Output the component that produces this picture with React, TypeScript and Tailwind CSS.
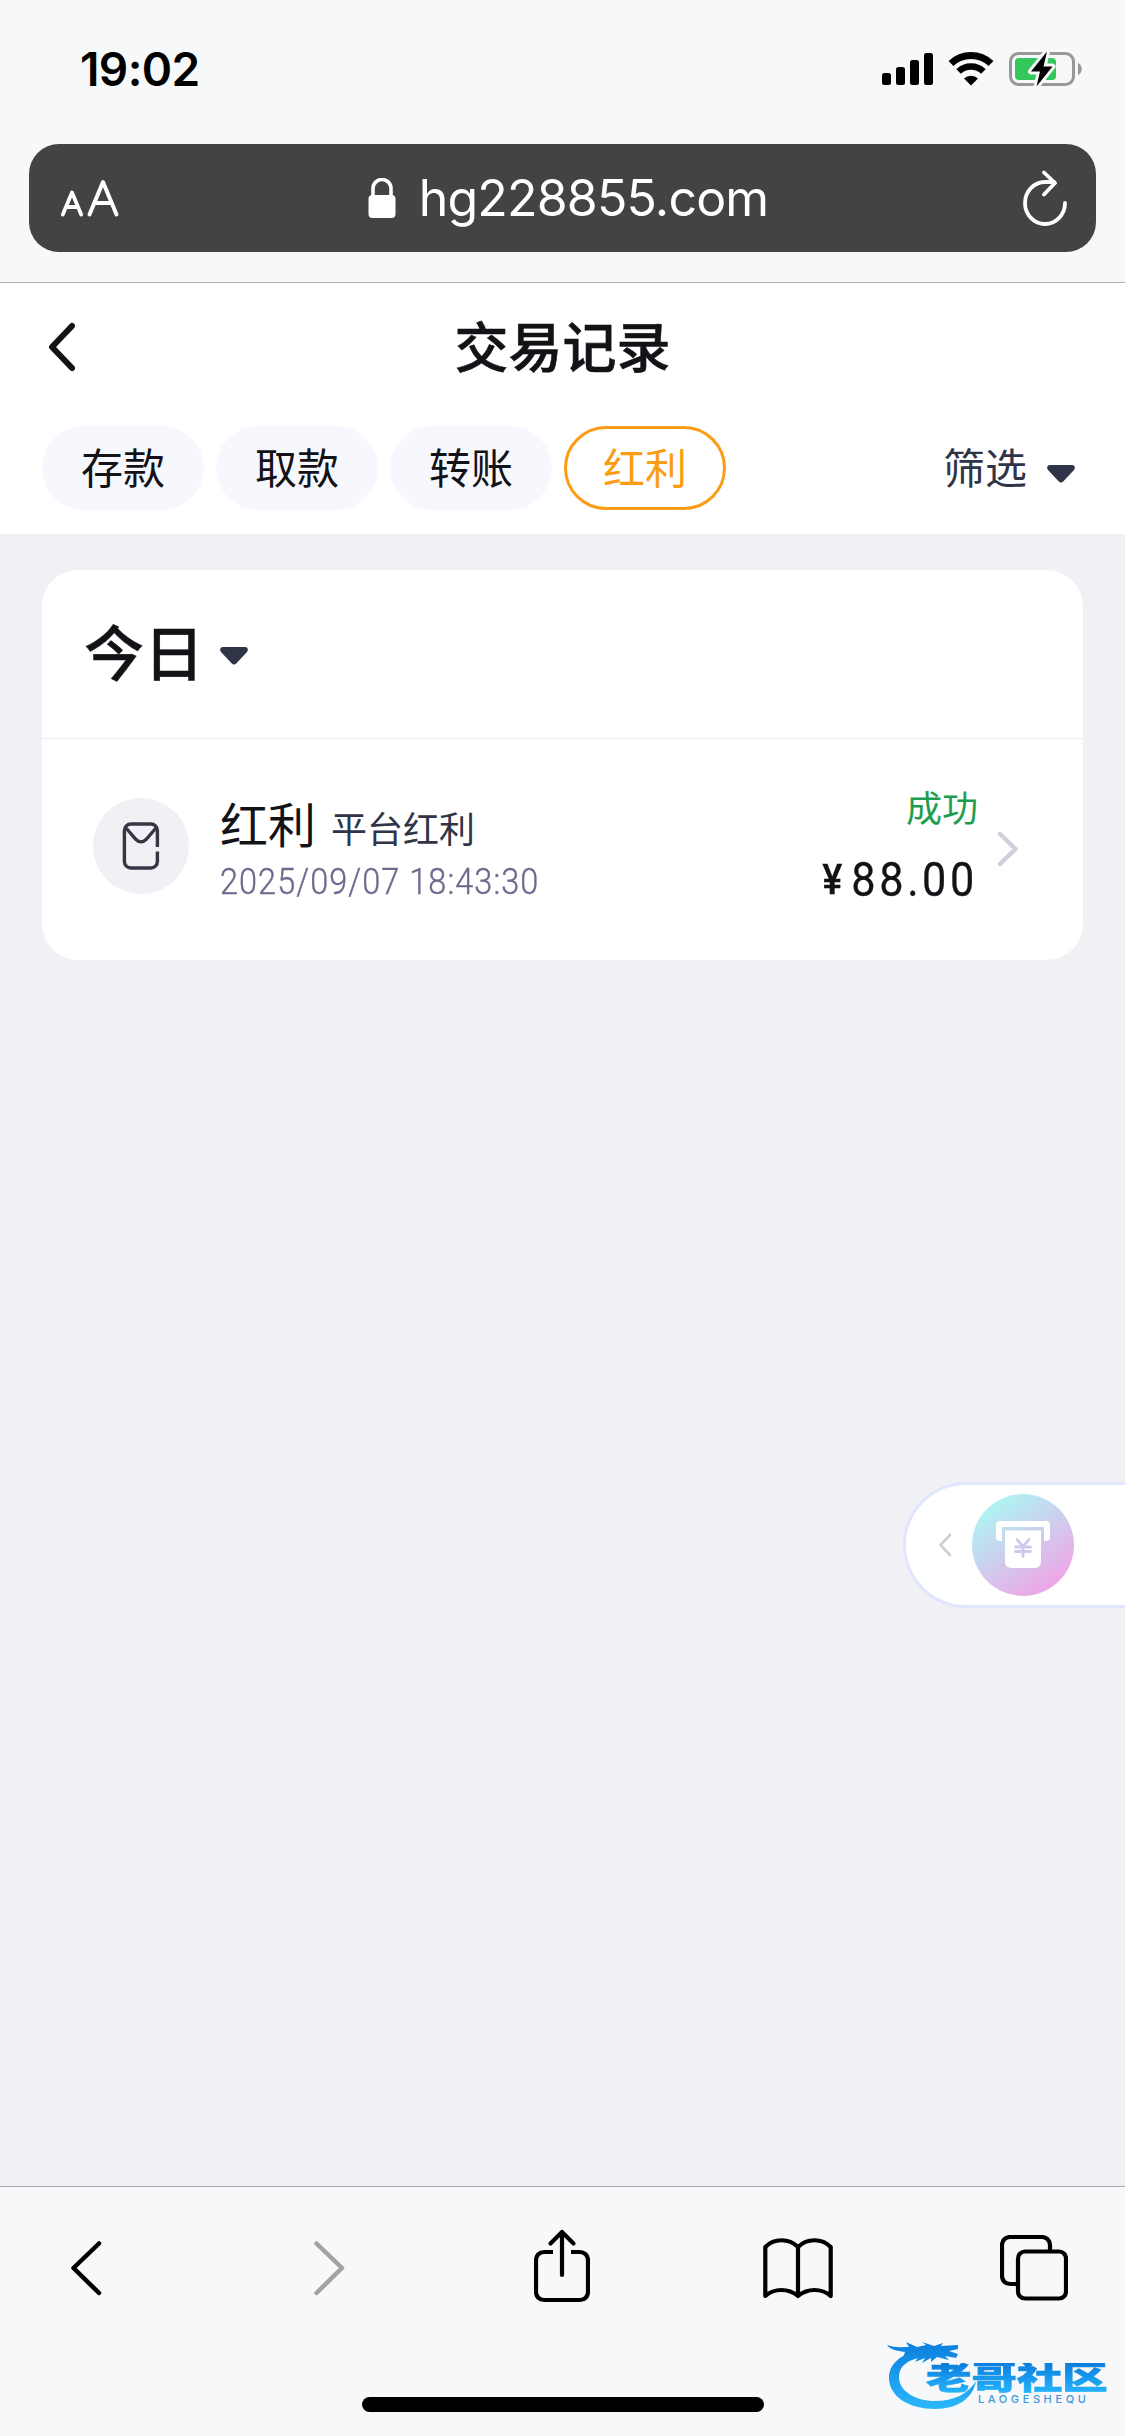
import clsx from 'clsx';

const tabs = ['存款', '取款', '转账', '红利'];

function StatusBar() {
  return (
    <div className="flex h-[144px] items-start justify-between pt-[35px] pl-[80px] pr-[41px]">
      <span className="text-[46px] leading-[68px] font-semibold tracking-[-0.6px] text-black">19:02</span>
      <div className="flex items-start pt-[16px]">
        <svg width="52" height="36" viewBox="0 0 52 36">
          <rect x="0" y="22" width="9" height="12" rx="2.5" />
          <rect x="14" y="16" width="9" height="18" rx="2.5" />
          <rect x="28" y="9" width="9" height="25" rx="2.5" />
          <rect x="42" y="2" width="9" height="32" rx="2.5" />
        </svg>
        <svg className="ml-[14px]" width="46" height="36" viewBox="0 0 46 36">
          <path d="M3 12.5a29 29 0 0 1 40 0" fill="none" stroke="#000" strokeWidth="7" />
          <path d="M10.6 20.5a18 18 0 0 1 24.8 0" fill="none" stroke="#000" strokeWidth="6.5" />
          <path d="M16 27.5a10 10 0 0 1 14 0L23 34.5z" />
        </svg>
        <svg className="ml-[15px]" width="75" height="38" viewBox="0 0 75 38">
          <rect x="1.500" y="2.500" width="63" height="31" rx="8" fill="none" stroke="#98989a" strokeWidth="3" />
          <path d="M69 12v12c5-2 5-10 0-12z" fill="#98989a" />
          <rect x="6" y="7" width="41" height="22" rx="4" fill="#34c759" />
          <path
            d="M38 .5 22 20.5h9L27.5 35.5 43.5 15.5h-9z"
            fill="#000"
            stroke="#f7f8f9"
            strokeWidth="6"
            strokeLinejoin="round"
            paintOrder="stroke"
          />
        </svg>
      </div>
    </div>
  );
}

function AddressBar() {
  return (
    <div className="mx-[29px] flex h-[108px] items-center justify-between rounded-[30px] bg-[#434344] pr-[28px] pl-[31px] text-white">
      <svg width="60" height="40" viewBox="0 0 60 40" fill="none" stroke="#fff" strokeLinecap="round" strokeLinejoin="round">
        <path d="M2.800 36.500 12 14.500l9.200 22M6 29h12" strokeWidth="3.800" />
        <path d="M29.500 36.500 43 4l13.500 32.500M34.500 25h17" strokeWidth="4" />
      </svg>
      <div className="flex items-center pr-[6px]">
        <svg className="mr-[23px]" width="28" height="40" viewBox="0 0 28 40">
          <rect x="0.500" y="17" width="27" height="23" rx="4" fill="#fff" />
          <path d="M5 18v-7.500a9 9 0 0 1 18 0V18" fill="none" stroke="#fff" strokeWidth="3.600" />
        </svg>
        <span className="text-[50px] leading-none tracking-[-0.8px]">hg228855.com</span>
      </div>
      <svg width="46" height="56" viewBox="0 0 46 56" fill="none" stroke="#fff" strokeWidth="3.800" strokeLinecap="round" strokeLinejoin="round">
        <path d="M43 33A20 21 0 1 1 23 12h9" />
        <path d="M22 2.500 33 13 22 24.500" />
      </svg>
    </div>
  );
}

function Caret() {
  return (
    <svg width="28" height="18" viewBox="0 0 28 18" fill="#2f3447">
      <path d="M3 0h22c2.600 0 3.800 3 2 4.900L16.200 16.500c-1.200 1.300-3.200 1.300-4.400 0L1 4.900C-.8 3 .4 0 3 0z" />
    </svg>
  );
}

function PageHeader() {
  return (
    <header className="h-[251px] bg-white">
      <div className="flex h-[143px] items-start justify-between px-[47px] pt-[26px]">
        <svg className="mt-[13px]" width="28" height="50" viewBox="0 0 28 50" fill="none" stroke="#131217" strokeWidth="6" strokeLinecap="round" strokeLinejoin="round">
          <path d="M25 4 5 25l20 21" />
        </svg>
        <h1 className="text-[54px] leading-[80px] font-medium text-[#131217] [-webkit-text-stroke:0.6px_#131217]">交易记录</h1>
        <div className="w-[28px]" />
      </div>
      <div className="flex items-center justify-between pr-[50px] pl-[42px]">
        <div className="flex gap-3">
          {tabs.map((tab) => (
            <button
              key={tab}
              className={clsx(
                'h-[84px] w-[162px] rounded-full text-[42px]',
                tab === '红利' ? 'border-[3px] border-[#fa9d15] text-[#fa9d15]' : 'bg-[#f7f8fe] text-[#131217]',
              )}
            >
              {tab}
            </button>
          ))}
        </div>
        <div className="flex items-center text-[42px] text-[#2f3447]">
          <span className="mr-[20px]">筛选</span>
          <div className="pt-[11px]">
            <Caret />
          </div>
        </div>
      </div>
    </header>
  );
}

function RecordCard() {
  return (
    <section className="mx-[42px] mt-9 h-[390px] rounded-[36px] bg-white">
      <div className="flex h-[169px] items-center border-b border-[#ececf0] pl-[42px]">
        <h2 className="mr-[16px] text-[60px] leading-none font-medium text-[#131217] [-webkit-text-stroke:0.4px_#131217]">今日</h2>
        <div className="pt-[4px]">
          <Caret />
        </div>
      </div>
      <div className="flex h-[214px] items-center pr-[63px] pl-[51px]">
        <div className="flex size-[96px] items-center justify-center rounded-full bg-[#f1f0f5]">
          <svg width="38" height="48" viewBox="0 0 38 48" fill="none" stroke="#343743" strokeWidth="3.400">
            <path d="M35.400 25V8.500a6.500 6.500 0 0 0-6.500-6.500h-20A6.500 6.500 0 0 0 2.400 8.500v31A6.500 6.500 0 0 0 8.900 46h20a6.500 6.500 0 0 0 6.500-6.500V29.500" />
            <path d="M4 6l10 11.500c3 3 7 3 10 0L34 6" />
          </svg>
        </div>
        <div className="ml-[31px] flex-1">
          <div className="flex items-baseline gap-[15px] pt-[11px]">
            <span className="text-[48px] leading-[60px] text-[#131217]">红利</span>
            <span className="text-[36px] leading-[60px] text-[#2f3447]">平台红利</span>
          </div>
          <div className="-mt-[4px] origin-left scale-x-[0.900] font-['Roboto'] text-[36px] leading-[52px] font-light tracking-[1.200px] whitespace-nowrap text-[#6c6b8d] [-webkit-text-stroke:0.4px_#6c6b8d]">
            2025/09/07 18:43:30
          </div>
        </div>
        <div className="flex flex-col items-end pt-[4px]">
          <span className="text-[36px] leading-[54px] text-[#1f9d4f]">成功</span>
          <div className="mt-[11px] flex origin-right scale-x-[0.900] items-baseline font-['Roboto'] text-[48px] leading-[66px] tracking-[4px] text-[#131217] [-webkit-text-stroke:0.3px_#131217]">
            <span className="mr-[6px] -translate-y-[2px] text-[42px] font-medium">¥</span>88.00
          </div>
        </div>
        <svg className="mt-[6px] ml-[18px]" width="24" height="38" viewBox="0 0 24 38" fill="none" stroke="#d0d0da" strokeWidth="4.500" strokeLinecap="round" strokeLinejoin="round">
          <path d="M4 4l15.500 15L4 34" />
        </svg>
      </div>
    </section>
  );
}

function FloatingEntry() {
  return (
    <div className="absolute top-[1482px] right-0 flex h-[126px] w-[222px] items-center rounded-l-full border-y-[3px] border-l-[3px] border-[#dfe6fd] bg-white pl-[32px]">
      <svg width="14" height="24" viewBox="0 0 14 24" fill="none" stroke="#cfcdda" strokeWidth="2.600" strokeLinecap="round" strokeLinejoin="round">
        <path d="M12 2 2.500 12 12 22" />
      </svg>
      <div className="ml-[20px] flex size-[102px] items-center justify-center rounded-full bg-linear-[145deg] from-[#abf8f4] from-10% to-[#f2a1e6] to-90%">
        <svg width="54" height="48" viewBox="0 0 54 48">
          <path d="M4 0h46a4 4 0 0 1 4 4v12a4 4 0 0 1-4 4h-2V6H6v14H4a4 4 0 0 1-4-4V4a4 4 0 0 1 4-4z" fill="#fff" />
          <path d="M9 9.500h36V41a6 6 0 0 1-6 6H15a6 6 0 0 1-6-6z" fill="#fff" />
          <path d="M21 18.500l6 7 6-7M27 26v9.500M19.500 26h15M19.500 30.500h15" fill="none" stroke="#cdc9ec" strokeWidth="2.800" strokeLinecap="round" />
        </svg>
      </div>
    </div>
  );
}

function Watermark() {
  return (
    <div className="absolute right-[12px] bottom-[20px] h-[84px] w-[230px]">
      <svg className="absolute inset-0" width="230" height="84" viewBox="0 0 230 84">
        <defs>
          <linearGradient id="dragon" gradientUnits="userSpaceOnUse" x1="0" y1="8" x2="0" y2="78">
            <stop offset="0" stopColor="#0a7ddd" />
            <stop offset="1" stopColor="#2bb8fc" />
          </linearGradient>
        </defs>
        <g fill="url(#dragon)">
          <path d="M34 19C16 23 6 33 6 46c0 19 21 31 46 31 23 0 38-11 41-28-8 13-22 20-41 20-20 0-36-10-36-24 0-11 9-18 25-20z" />
          <path d="M4 13c8 3 14 2 22 2l-3-5 11 5 9-2-4-3 12 4 9-3-2 3 17-1v4l-9 2 9 3-2 4-11-2 4 4-12-3-6 5 0-4-9 5 3-5-10 4 4-6c-8 1-14 3-18 7l4-11C13 19 7 17 4 13z" />
        </g>
      </svg>
      <div className="absolute top-[31px] left-[43px] origin-left scale-x-[1.420] bg-linear-to-b from-[#0a7ddd] to-[#27b4fb] bg-clip-text text-[32px] leading-[30px] font-black whitespace-nowrap text-transparent [-webkit-text-stroke:0.7px_transparent]">
        老哥社区
      </div>
      <div className="absolute top-[61px] left-[95px] text-[11px] leading-[12px] font-medium tracking-[3.600px] text-[#3b97e0]">LAOGESHEQU</div>
    </div>
  );
}

function BottomBar() {
  return (
    <footer className="relative h-[250px] border-t border-[#a8a8ab] bg-[#f7f8f9]">
      <div className="flex items-start pt-[42px] pl-[69px] [&_svg]:fill-none [&_svg]:stroke-black">
        <svg className="mt-[11px]" width="34" height="56" viewBox="0 0 34 56" strokeWidth="4.500" strokeLinecap="round" strokeLinejoin="round">
          <path d="M30 3.500 4.500 28 30 53" />
        </svg>
        <svg className="mt-[11px] ml-[209px]" width="34" height="56" viewBox="0 0 34 56" strokeWidth="4.500" strokeLinecap="round" strokeLinejoin="round">
          <path d="M4.500 3.500 30 28 4.500 53" stroke="#a3a3a4" />
        </svg>
        <svg className="ml-[188px]" width="56" height="74" viewBox="0 0 56 74" strokeWidth="4.200" strokeLinecap="round" strokeLinejoin="round">
          <path d="M19 23h-9a8 8 0 0 0-8 8v32a8 8 0 0 0 8 8h36a8 8 0 0 0 8-8V31a8 8 0 0 0-8-8h-9" strokeLinecap="butt" />
          <path d="M28 46V4M16.500 14.500 28 3l11.500 11.500" />
        </svg>
        <svg className="mt-[8px] ml-[173px]" width="70" height="64" viewBox="0 0 70 64" strokeWidth="4.200" strokeLinecap="round" strokeLinejoin="round">
          <path d="M35 59V10C26 1 11 1 2.300 10v49c9-8 23-8 32.700 0 9.700-8 23.700-8 32.700 0V10C59 1 44 1 35 10" />
        </svg>
        <svg className="mt-[6px] ml-[167px]" width="68" height="68" viewBox="0 0 68 68" strokeWidth="4.200">
          <path d="M16 49h-6a8 8 0 0 1-8-8V10a8 8 0 0 1 8-8h32a8 8 0 0 1 8 8v6" />
          <rect x="18" y="16.500" width="48" height="47" rx="7" />
        </svg>
      </div>
      <div className="absolute bottom-6 left-[362px] h-[15px] w-[402px] rounded-full bg-black" />
      <Watermark />
    </footer>
  );
}

export default function App() {
  return (
    <div className="relative flex h-[2436px] w-[1125px] flex-col overflow-hidden bg-[#f1f0f5] font-['Inter','Noto_Sans_CJK_SC',sans-serif]">
      <div className="h-[283px] border-b border-[#b0b0b3] bg-[#f7f8f9]">
        <StatusBar />
        <AddressBar />
      </div>
      <PageHeader />
      <main className="flex-1">
        <RecordCard />
      </main>
      <BottomBar />
      <FloatingEntry />
    </div>
  );
}
